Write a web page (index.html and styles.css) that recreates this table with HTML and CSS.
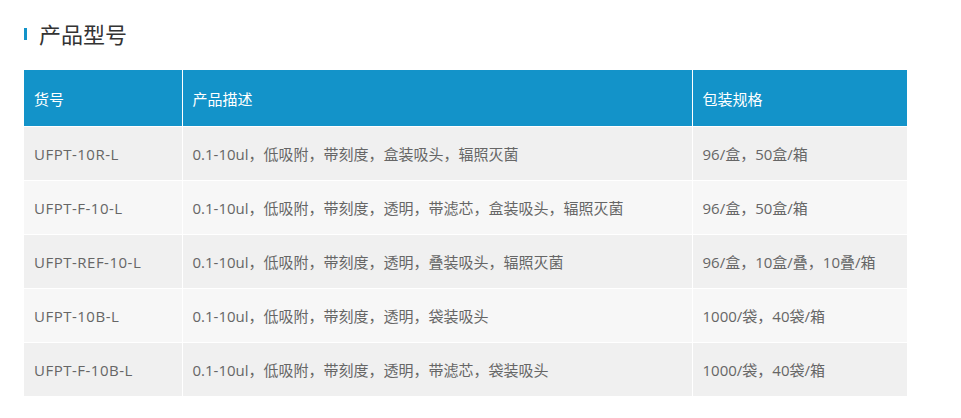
FILE: index.html
```html
<!DOCTYPE html>
<html lang="zh-CN">
<head>
<meta charset="utf-8">
<title>产品型号</title>
<link rel="stylesheet" href="styles.css">
</head>
<body>
<div class="page">
  <h2 class="section-title"><span class="accent"></span>产品型号</h2>
  <table class="spec-table">
    <colgroup>
      <col class="c1"><col class="c2"><col class="c3">
    </colgroup>
    <thead>
      <tr><th>货号</th><th>产品描述</th><th>包装规格</th></tr>
    </thead>
    <tbody>
      <tr><td class="code">UFPT-10R-L</td><td>0.1-10ul，低吸附，带刻度，盒装吸头，辐照灭菌</td><td>96/盒，50盒/箱</td></tr>
      <tr><td class="code">UFPT-F-10-L</td><td>0.1-10ul，低吸附，带刻度，透明，带滤芯，盒装吸头，辐照灭菌</td><td>96/盒，50盒/箱</td></tr>
      <tr><td class="code">UFPT-REF-10-L</td><td>0.1-10ul，低吸附，带刻度，透明，叠装吸头，辐照灭菌</td><td>96/盒，10盒/叠，10叠/箱</td></tr>
      <tr><td class="code">UFPT-10B-L</td><td>0.1-10ul，低吸附，带刻度，透明，袋装吸头</td><td>1000/袋，40袋/箱</td></tr>
      <tr><td class="code">UFPT-F-10B-L</td><td>0.1-10ul，低吸附，带刻度，透明，带滤芯，袋装吸头</td><td>1000/袋，40袋/箱</td></tr>
    </tbody>
  </table>
</div>
</body>
</html>
```

FILE: styles.css
```css
html, body {
  margin: 0;
  padding: 0;
  background: #ffffff;
}
body {
  font-family: "Open Sans", "Noto Sans CJK SC", sans-serif;
}
.page {
  padding: 17px 0 0 24px;
}
.section-title {
  display: flex;
  align-items: center;
  gap: 12px;
  margin: 0;
  height: 32px;
  font-size: 22px;
  font-weight: normal;
  color: #333333;
  font-family: "Noto Sans CJK SC", sans-serif;
  line-height: 32px;
}
.accent {
  display: block;
  width: 3px;
  height: 12px;
  background: #1393c9;
  margin-top: 1px;
}
.spec-table {
  margin-top: 21px;
  border-collapse: collapse;
  table-layout: fixed;
  width: 883px;
  font-size: 15px;
}
.c1 { width: 158px; }
.c2 { width: 510px; }
.c3 { width: 215px; }
.spec-table th,
.spec-table td {
  border: 1px solid #ffffff;
  padding: 0 0 0 10px;
  text-align: left;
  white-space: nowrap;
}
.spec-table tr > :first-child { border-left: none; }
.spec-table tr > :last-child { border-right: none; }
.spec-table th {
  background: #1393c9;
  color: #ffffff;
  font-weight: normal;
  height: 56px;
  border-top: none;
}
.spec-table td {
  height: 53px;
  color: #666666;
}
.spec-table td.code {
  letter-spacing: 0.5px;
}
.spec-table tbody tr:nth-child(odd) td { background: #f0f0f0; }
.spec-table tbody tr:nth-child(even) td { background: #f7f7f7; }
.spec-table tbody tr:last-child td { border-bottom: none; }
```
